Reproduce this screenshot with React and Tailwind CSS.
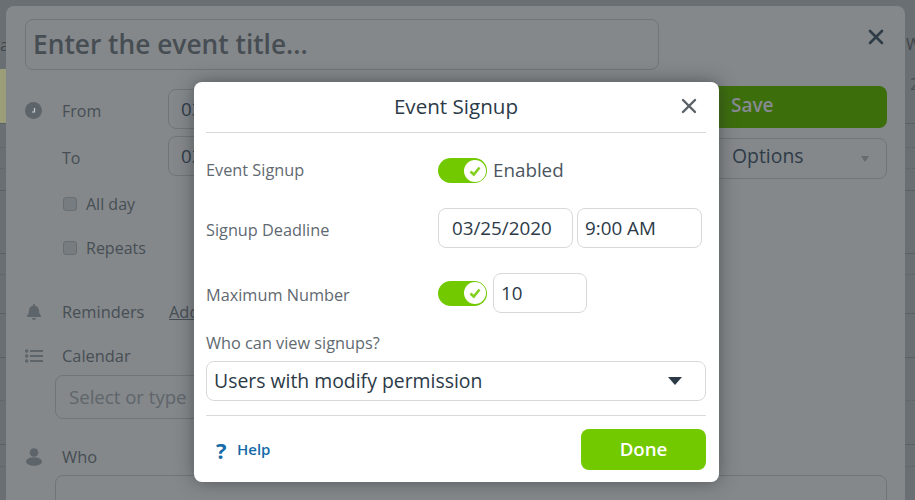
import { X } from "lucide-react";
import { FaBell } from "react-icons/fa";

function Toggle() {
    return (
        <div className="flex h-[25px] w-[49px] shrink-0 items-center justify-end rounded-full bg-[#73c900] pr-[1px]">
            <div className="flex h-[22px] w-[22px] items-center justify-center rounded-full bg-white">
                <svg width="14" height="14" viewBox="0 0 14 14" fill="none">
                    <path d="M2.5 7.5 L5.8 10.5 L11.5 3.5" stroke="#85d01f" strokeWidth="2.6" />
                </svg>
            </div>
        </div>
    );
}

function Field({ className, children }) {
    return (
        <div className={"flex h-[40px] items-center rounded-[8px] border border-[#d8d8d8] bg-white text-[18.8px] text-[#2c3a47] " + className}>
            {children}
        </div>
    );
}

function SignupModal() {
    return (
        <div className="absolute left-[194px] top-[82px] flex h-[400px] w-[525px] flex-col rounded-[8px] bg-white pl-[12px] pr-[13px] shadow-[0_0_18px_rgba(40,45,50,0.55)]">
            <div className="relative flex h-[51px] shrink-0 items-center justify-center border-b border-[#d9d9d9] text-[20.6px] font-medium leading-none text-[#2c3a47]">
                <span className="pb-[2px]">Event Signup</span>
                <X className="absolute right-[5px] top-[12px] text-[#5a6268]" size={24} strokeWidth={2.4} />
            </div>

            <div className="mt-[25px] flex h-[25px] items-center text-[#5f6971]">
                <span className="w-[232px] text-[16.3px]">Event Signup</span>
                <Toggle />
                <span className="ml-[6px] text-[18.8px] text-[#4a5560]">Enabled</span>
            </div>

            <div className="mt-[25px] flex items-center">
                <span className="w-[232px] pt-[4px] text-[16.3px] text-[#5f6971]">Signup Deadline</span>
                <Field className="w-[135px] pl-[13px]">03/25/2020</Field>
                <Field className="ml-[4px] w-[125px] pl-[7px]">9:00 AM</Field>
            </div>

            <div className="mt-[25px] flex items-center">
                <span className="w-[232px] pt-[5px] text-[16.3px] text-[#5f6971]">Maximum Number</span>
                <Toggle />
                <Field className="ml-[6px] w-[94px] pl-[7px]">10</Field>
            </div>

            <div className="mt-[20px] text-[16.3px] leading-[21px] text-[#5f6971]">Who can view signups?</div>

            <Field className="mt-[7px] justify-between pl-[7px] pr-[23px] font-medium">
                <span className="text-[19.4px]">Users with modify permission</span>
                <div className="h-0 w-0 border-x-[7px] border-t-[8px] border-x-transparent border-t-[#2c3a47]" />
            </Field>

            <div className="mt-[14px] flex flex-1 items-start justify-between border-t border-[#d9d9d9] pt-[13px]">
                <div className="flex h-[41px] items-center pl-[10px] text-[15px] font-semibold text-[#156aa8]">
                    <span className="w-[21px] text-[22px] font-bold leading-none">?</span>
                    <span>Help</span>
                </div>
                <div className="flex h-[41px] w-[125px] items-center justify-center rounded-[8px] bg-[#73c900] text-[18.7px] font-semibold text-white">
                    Done
                </div>
            </div>
        </div>
    );
}

const edgeLines = [
    { top: "top-[123px]", solid: true },
    { top: "top-[147px]", solid: false },
    { top: "top-[168px]", solid: false },
    { top: "top-[190px]", solid: true },
    { top: "top-[253px]", solid: true },
    { top: "top-[274px]", solid: false },
    { top: "top-[313px]", solid: true },
    { top: "top-[357px]", solid: true },
    { top: "top-[400px]", solid: false },
    { top: "top-[444px]", solid: true },
    { top: "top-[466px]", solid: false },
];

export default function App() {
    return (
        <div className="relative h-[500px] w-[915px] overflow-hidden bg-[#6a6f73] font-['Open_Sans',sans-serif]">
            {/* calendar peeking out behind the event window */}
            {edgeLines.map((line) => (
                <div key={line.top} className={"absolute left-0 w-full border-t border-[#5b6064] " + line.top + (line.solid ? "" : " border-dotted")} />
            ))}
            <div className="absolute left-0 top-[33px] text-[16px] text-[#3f464c]">a</div>
            <div className="absolute left-0 top-[69px] h-[54px] w-[6px] bg-[#9c9e7a]" />
            <div className="absolute left-[906px] top-[32px] text-[16px] text-[#3f464c]">W</div>
            <div className="absolute left-[910px] top-[72px] text-[16px] text-[#4a5056]">2</div>

            <div className="absolute left-[6px] top-[6px] h-[520px] w-[899px] rounded-[8px] bg-[#84888b]">
                <div className="flex pl-[19px] pr-[19px] pt-[13px]">
                    <div className="flex h-[51px] w-[634px] shrink-0 items-center rounded-[8px] border border-[#70757a] pl-[7px] text-[26.3px] font-semibold text-[#464d53]">
                        Enter the event title...
                    </div>
                    <X className="ml-[205px] mt-[6px] shrink-0 text-[#2f3b47]" size={24} strokeWidth={2.6} />
                </div>

                <div className="flex">
                    <div className="w-[660px] shrink-0 pl-[19px]">
                        <div className="mt-[19px] flex h-[40px] items-center">
                            <div className="mt-[3px] flex h-[17px] w-[17px] items-center justify-center rounded-full bg-[#5d646a]">
                                <svg width="10" height="10" viewBox="0 0 10 10" fill="none">
                                    <path d="M5.5 2 V6 H3" stroke="#c9cccf" strokeWidth="1.2" />
                                </svg>
                            </div>
                            <span className="ml-[20px] w-[106px] pt-[4px] text-[16px] text-[#474e54]">From</span>
                            <div className="flex h-[40px] w-[200px] items-center rounded-[8px] border border-[#70757a] pl-[12px] text-[18.8px] text-[#2f3b47]">03/25/2020</div>
                        </div>
                        <div className="mt-[7px] flex h-[40px] items-center">
                            <span className="ml-[37px] w-[106px] pt-[4px] text-[16px] text-[#474e54]">To</span>
                            <div className="flex h-[40px] w-[200px] items-center rounded-[8px] border border-[#70757a] pl-[12px] text-[18.8px] text-[#2f3b47]">03/25/2020</div>
                        </div>
                        <label className="ml-[38px] mt-[16px] flex h-[24px] items-center text-[16px] text-[#474e54]">
                            <span className="mr-[9px] h-[14px] w-[14px] rounded-[3px] border border-[#696e72] bg-[#777c80]" />
                            All day
                        </label>
                        <label className="ml-[38px] mt-[20px] flex h-[24px] items-center text-[16px] text-[#474e54]">
                            <span className="mr-[9px] h-[14px] w-[14px] rounded-[3px] border border-[#696e72] bg-[#777c80]" />
                            Repeats
                        </label>
                        <div className="mt-[40px] flex h-[24px] items-center">
                            <FaBell className="ml-[1px] text-[#5d646a]" size={16} />
                            <span className="ml-[20px] w-[107px] text-[16.4px] text-[#474e54]">Reminders</span>
                            <span className="text-[16.4px] text-[#474e54] underline">Add</span>
                        </div>
                        <div className="mt-[20px] flex h-[24px] items-center">
                            <svg width="18" height="14" viewBox="0 0 18 14" fill="#5d646a">
                                <circle cx="1.7" cy="2" r="1.7" />
                                <circle cx="1.7" cy="7" r="1.7" />
                                <circle cx="1.7" cy="12" r="1.7" />
                                <rect x="5" y="1" width="13" height="2" />
                                <rect x="5" y="6" width="13" height="2" />
                                <rect x="5" y="11" width="13" height="2" />
                            </svg>
                            <span className="ml-[19px] text-[16.4px] text-[#474e54]">Calendar</span>
                        </div>
                        <div className="ml-[30px] mt-[7px] flex h-[44px] w-[400px] items-center rounded-[8px] border border-[#70757a] pl-[13px] text-[18.6px] text-[#5f656a]">
                            Select or type
                        </div>
                        <div className="mt-[26px] flex h-[24px] items-center">
                            <svg width="18" height="18" viewBox="0 0 18 18" fill="#5d646a">
                                <circle cx="9" cy="4.5" r="4.3" />
                                <ellipse cx="9" cy="13.5" rx="8" ry="4.3" />
                            </svg>
                            <span className="ml-[19px] text-[16.4px] text-[#474e54]">Who</span>
                        </div>
                    </div>

                    <div className="ml-[24px] mt-[16px] w-[197px] shrink-0">
                        <div className="flex h-[42px] items-center rounded-[8px] bg-[#3d6e0c] pb-[4px] pl-[41px] text-[19px] font-semibold text-[#878a92]">
                            Save
                        </div>
                        <div className="mt-[10px] flex h-[41px] items-center justify-between rounded-[8px] border border-[#70757a] pb-[6px] pl-[41px] pr-[17px] text-[19.4px] font-medium text-[#2f3b47]">
                            Options
                            <div className="mt-[6px] h-0 w-0 border-x-[4px] border-t-[6px] border-x-transparent border-t-[#666b70]" />
                        </div>
                    </div>
                </div>

                {/* who box running off the bottom edge */}
                <div className="absolute left-[49px] top-[469px] h-[80px] w-[832px] rounded-[8px] border border-[#70757a]" />
            </div>

            <SignupModal />
        </div>
    );
}
